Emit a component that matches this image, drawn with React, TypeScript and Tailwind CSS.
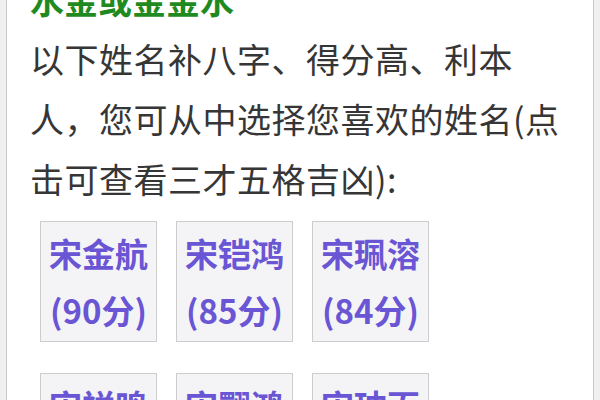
import React from 'react';

const names = [
  { name: '宋金航', score: 90 },
  { name: '宋铠鸿', score: 85 },
  { name: '宋珮溶', score: 84 },
  { name: '宋祥鸣', score: 83 },
  { name: '宋翾鸿', score: 83 },
  { name: '宋珅百', score: 82 },
];

export default function App() {
  return (
    <div
      className="w-[600px] h-[400px] overflow-hidden bg-[#f0f0f0] flex"
      style={{ fontFamily: '"Noto Sans CJK SC", "Noto Sans", sans-serif' }}
    >
      <div className="ml-[6px] w-[588px] h-full bg-white border-x border-[#c8c8c8] pl-[23px] pr-[23px]">
        <h2 className="text-[34px] leading-[30px] font-bold text-[#1f8a1f] mt-[-15px]">
          水金或金金水
        </h2>
        <p className="mt-[14px] text-[34px] leading-[60px] text-[#363636] tracking-[0.5px]">
          以下姓名补八字、得分高、利本人，您可从中选择您喜欢的姓名(点击可查看三才五格吉凶):
        </p>
        <div className="mt-[12px] ml-[10px] grid grid-cols-[117px_117px_117px] gap-x-[19px] gap-y-[31px]">
          {names.map((n) => (
            <div
              key={n.name}
              className="h-[121px] bg-[#f4f4f6] border border-[#cdcdcd] pt-[3px] text-center text-[33px] leading-[57px] font-bold text-[#6a55d4]"
            >
              <div>{n.name}</div>
              <div>({n.score}分)</div>
            </div>
          ))}
        </div>
      </div>
    </div>
  );
}
